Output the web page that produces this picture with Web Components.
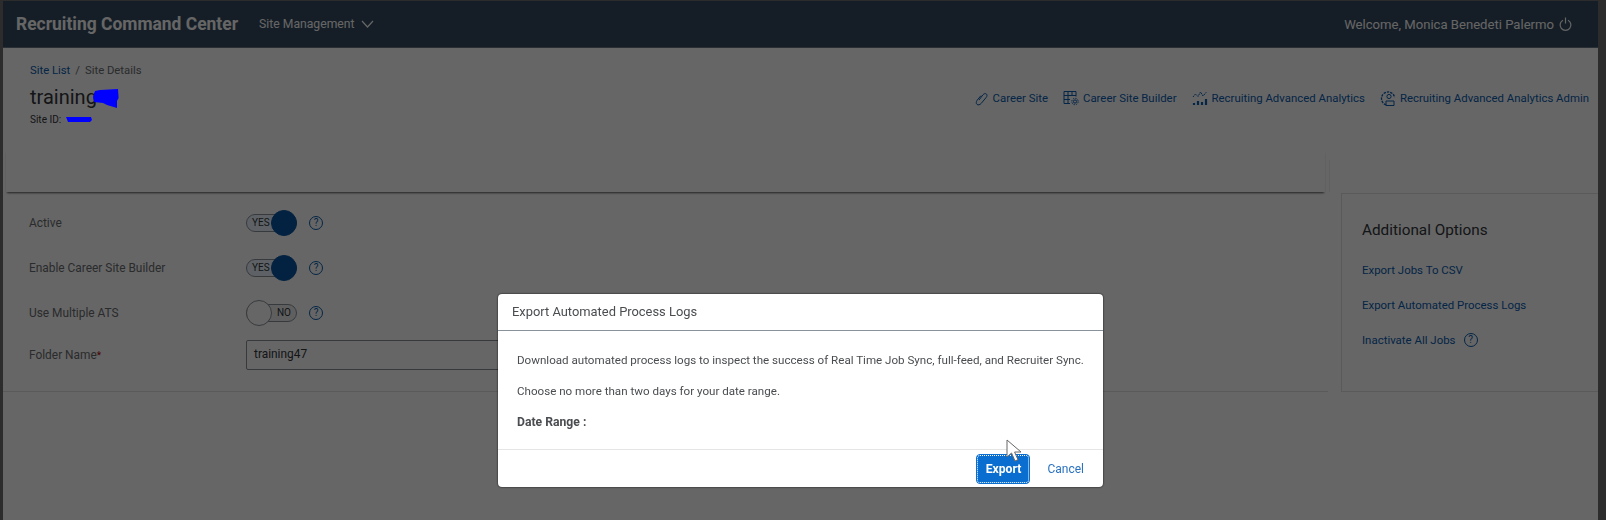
<!DOCTYPE html>
<html lang="en">
<head>
<meta charset="utf-8">
<title>Recruiting Command Center</title>
<style>
  html, body { height: 100%; }
  body {
    margin: 0;
    padding: 1px 8px 0 3px;
    box-sizing: border-box;
    overflow: hidden;
    background: #6e6e6e;
    font-family: Roboto, "Liberation Sans", sans-serif;
    font-size: 12px;
    color: #32363a;
    filter: blur(.35px);
    --link: #0a5cb0;
  }
  rc-app { height: 100%; }
</style>
</head>
<body>
<rc-app>
  <rc-shellbar user="Welcome, Monica Benedeti Palermo"></rc-shellbar>
  <rc-page-head></rc-page-head>
  <rc-tabs></rc-tabs>
  <rc-site-body>
    <rc-site-form slot="form">
      <rc-form-row label="Active"><rc-toggle on></rc-toggle><rc-help></rc-help></rc-form-row>
      <rc-form-row label="Enable Career Site Builder"><rc-toggle on></rc-toggle><rc-help></rc-help></rc-form-row>
      <rc-form-row label="Use Multiple ATS"><rc-toggle></rc-toggle><rc-help></rc-help></rc-form-row>
      <rc-form-row label="Folder Name" required><rc-text-field>training47</rc-text-field></rc-form-row>
    </rc-site-form>
    <rc-options slot="aside"></rc-options>
  </rc-site-body>
</rc-app>
<rc-dialog heading="Export Automated Process Logs">
  <p>Download automated process logs to inspect the success of Real Time Job Sync, full-feed, and Recruiter Sync.</p>
  <p>Choose no more than two days for your date range.</p>
  <p><b style="font-size:12.2px">Date Range :</b></p>
</rc-dialog>

<script>
class RcApp extends HTMLElement {
  constructor() {
    super();
    this.attachShadow({ mode: "open" });
    this.shadowRoot.innerHTML = /* html */`
    <style>
      :host { display: flex; flex-direction: column; background: #fff; }
    </style>
    <slot></slot>`;
  }
}

class RcShellbar extends HTMLElement {
  constructor() {
    super();
    this.attachShadow({ mode: "open" });
  }

  connectedCallback() {
    this.shadowRoot.innerHTML = /* html */`
    <style>
      :host {
        display: flex;
        align-items: center;
        height: 46px;
        padding: 0 26px 0 13px;
        background: #354a5f;
        border-bottom: 1px solid #6a7785;
        color: #fff;
      }
      .brand { font-size: 17.45px; font-weight: 700; }
      .menu { display: flex; align-items: center; gap: 6px; margin-left: 21px; font-size: 12.2px; }
      .user { display: flex; align-items: center; gap: 5px; margin-left: auto; font-size: 13.1px; }
      svg { display: block; fill: none; stroke: currentColor; stroke-width: 1.2; }
    </style>
    <span class="brand">Recruiting Command Center</span>
    <span class="menu">Site Management
      <svg width="13" height="8" viewBox="0 0 13 8"><path d="M1 1l5.5 6L12 1"/></svg>
    </span>
    <span class="user">${this.getAttribute("user")}
      <svg width="13" height="14" viewBox="0 0 13 14"><path d="M4 3.2a5.4 5.4 0 1 0 5 0M6.5 .5v6"/></svg>
    </span>`;
  }
}

class RcPageHead extends HTMLElement {
  constructor() {
    super();
    this.attachShadow({ mode: "open" });
  }

  static get icons() {
    return {
      link: `<path d="M6 10l4-5.2c1-1.3 2.6-1.5 3.4-.8s.8 2.2-.2 3.4L8.2 13.4c-1.3 1.6-3.2 1.8-4.2 1s-1-2.6.2-4.2L8 5.6"/>`,
      builder: `<path d="M7 13.5H1v-12h12v5M5 1.5v12M9 1.5v4M1 5.5h12M1 9.5h6"/><circle cx="12" cy="11.5" r="1.6"/><circle cx="12" cy="11.5" r="3.2" stroke-dasharray="1.4 1.1"/>`,
      analytics: `<path d="M1 7l2.5-3L6 6.5 8.5 2l2.5 4 3.5-4" stroke-dasharray="1.6 .7"/><path d="M2 15v-2M6 15v-4M10 15v-3M14 15V9" stroke-width="2.2"/>`,
      admin: `<path d="M6 14.8A6.6 6.6 0 1 1 14.6 7.5" stroke-dasharray="2.4 1" stroke-width="1.3"/><circle cx="9" cy="6.5" r="2.1"/><path d="M6 15.5v-4.5h8v4.5z"/>`
    };
  }

  connectedCallback() {
    const icons = RcPageHead.icons;
    const links = [
      ["link", "Career Site"],
      ["builder", "Career Site Builder"],
      ["analytics", "Recruiting Advanced Analytics"],
      ["admin", "Recruiting Advanced Analytics Admin"]
    ];

    this.shadowRoot.innerHTML = /* html */`
    <style>
      :host {
        display: flex;
        justify-content: space-between;
        box-sizing: border-box;
        height: 102px;
        padding: 15px 9px 0 27px;
      }
      .crumbs { height: 16px; line-height: 16px; font-size: 11.3px; color: #6a6d70; }
      .crumbs a { color: var(--link); }
      .crumbs i { font-style: normal; margin: 0 5px; }
      h1 {
        position: relative;
        margin: 4px 0 0;
        font-size: 20px;
        line-height: 28px;
        font-weight: 400;
      }
      .id { position: relative; margin-top: 2px; line-height: 14px; font-size: 10px; color: #32363a; }
      /* blue marker scribbles sit on top of everything, even the dialog backdrop */
      .scribble { position: absolute; z-index: 20; }
      h1 .scribble { left: 63px; top: 5px; }
      .id .scribble { left: 35px; top: 3px; }
      nav { display: flex; gap: 15px; height: 20px; margin-top: 25px; }
      nav a { display: flex; align-items: center; gap: 4px; font-size: 11.4px; color: var(--link); white-space: nowrap; }
      nav svg { display: block; fill: none; stroke: currentColor; stroke-width: 1; }
    </style>
    <div>
      <div class="crumbs"><a>Site List</a><i>/</i>Site Details</div>
      <h1>training
        <svg class="scribble" width="26" height="21" viewBox="0 0 26 21"><path d="M2 3l5-1 18-1 .6 9-1.6 3v7l-10-3-4-2-9-1-1-5z" fill="#00f"/></svg>
      </h1>
      <div class="id">Site ID:
        <svg class="scribble" width="28" height="7" viewBox="0 0 28 7"><path d="M1 1h25l1 3-2 2H3z" fill="#00f"/></svg>
      </div>
    </div>
    <nav>
      ${links.map(([icon, text]) => `<a><svg width="16" height="16" viewBox="0 0 16 16">${icons[icon]}</svg>${text}</a>`).join("")}
    </nav>`;
  }
}

class RcTabs extends HTMLElement {
  constructor() {
    super();
    this.attachShadow({ mode: "open" });
    this.shadowRoot.innerHTML = /* html */`
    <style>
      :host { display: flex; height: 42px; }
      .bar { width: 1319px; margin-left: 3px; box-shadow: 0 2px 2px -1px #000a; }
      .rule { width: 1px; margin: 10px 0 0 4px; background: #0000000f; }
    </style>
    <div class="bar"></div>
    <div class="rule"></div>`;
  }
}

class RcSiteBody extends HTMLElement {
  constructor() {
    super();
    this.attachShadow({ mode: "open" });
    this.shadowRoot.innerHTML = /* html */`
    <style>
      :host { display: flex; flex: 1; }
      ::slotted([slot="form"]) { width: 1325px; }
      ::slotted([slot="aside"]) { flex: 1; margin-left: 13px; }
    </style>
    <slot name="form"></slot>
    <slot name="aside"></slot>`;
  }
}

class RcSiteForm extends HTMLElement {
  constructor() {
    super();
    this.attachShadow({ mode: "open" });
    this.shadowRoot.innerHTML = /* html */`
    <style>
      :host {
        display: block;
        box-sizing: border-box;
        height: 200px;
        padding: 8px 0 0 26px;
        border-bottom: 1px solid #e0e0e0;
      }
    </style>
    <slot></slot>`;
  }
}

class RcFormRow extends HTMLElement {
  constructor() {
    super();
    this.attachShadow({ mode: "open" });
  }

  connectedCallback() {
    const star = this.hasAttribute("required") ? `<span class="req">*</span>` : "";
    this.shadowRoot.innerHTML = /* html */`
    <style>
      :host {
        display: grid;
        grid-template-columns: 217px 1fr;
        align-items: center;
        height: 45px;
      }
      :host([required]) { height: 40px; }
      label { font-size: 11.9px; color: #6a6d70; }
      .req { color: #bb0000; font-size: 10px; }
      .field { display: flex; align-items: center; gap: 12px; }
    </style>
    <label>${this.getAttribute("label")}${star}</label>
    <div class="field"><slot></slot></div>`;
  }
}

class RcToggle extends HTMLElement {
  constructor() {
    super();
    this.attachShadow({ mode: "open" });
  }

  connectedCallback() {
    const on = this.hasAttribute("on");
    this.shadowRoot.innerHTML = /* html */`
    <style>
      :host {
        position: relative;
        display: flex;
        align-items: center;
        width: 51px;
        height: 26px;
      }
      .track {
        box-sizing: border-box;
        width: 100%;
        height: 18px;
        line-height: 16px;
        padding: 0 5px;
        border: 1px solid #89919a;
        border-radius: 9px;
        background: ${on ? "#ebf5fe" : "#ededed"};
        font-size: 10px;
        color: #32363a;
        text-align: ${on ? "left" : "right"};
      }
      .knob {
        position: absolute;
        top: 0;
        ${on ? "right: 0;" : "left: 0;"}
        box-sizing: border-box;
        width: 26px;
        height: 26px;
        border-radius: 50%;
        border: 1px solid ${on ? "#0854a0" : "#89919a"};
        background: ${on ? "#0854a0" : "#fff"};
      }
    </style>
    <div class="track">${on ? "YES" : "NO"}</div>
    <div class="knob"></div>`;
  }
}

class RcHelp extends HTMLElement {
  constructor() {
    super();
    this.attachShadow({ mode: "open" });
    this.shadowRoot.innerHTML = /* html */`
    <style>
      :host {
        display: inline-grid;
        place-items: center;
        box-sizing: border-box;
        width: 14px;
        height: 14px;
        border: 1px solid var(--link);
        border-radius: 50%;
        font-size: 10px;
        line-height: 1;
        color: var(--link);
      }
    </style>
    ?`;
  }
}

class RcTextField extends HTMLElement {
  constructor() {
    super();
    this.attachShadow({ mode: "open" });
    this.shadowRoot.innerHTML = /* html */`
    <style>
      :host {
        display: block;
        box-sizing: border-box;
        width: 700px;
        height: 30px;
        padding: 0 7px;
        line-height: 26px;
        border: 1px solid #89919a;
        border-radius: 2px;
        background: #fff;
        font-size: 11.9px;
        color: #32363a;
      }
    </style>
    <slot></slot>`;
  }
}

class RcOptions extends HTMLElement {
  constructor() {
    super();
    this.attachShadow({ mode: "open" });
  }

  connectedCallback() {
    this.shadowRoot.innerHTML = /* html */`
    <style>
      :host {
        display: block;
        box-sizing: border-box;
        height: 199px;
        margin-top: 1px;
        padding: 26px 0 0 20px;
        border: 1px solid #e0e0e0;
        border-right: 0;
      }
      h2 { margin: 0 0 20px; font-size: 15.3px; line-height: 20px; font-weight: 400; }
      a { display: flex; align-items: center; gap: 8px; height: 20px; margin-bottom: 15px; font-size: 11.45px; color: var(--link); }
    </style>
    <h2>Additional Options</h2>
    <a>Export Jobs To CSV</a>
    <a>Export Automated Process Logs</a>
    <a>Inactivate All Jobs <rc-help></rc-help></a>`;
  }
}

class RcDialog extends HTMLElement {
  constructor() {
    super();
    this.attachShadow({ mode: "open" });
  }

  connectedCallback() {
    this.shadowRoot.innerHTML = /* html */`
    <style>
      :host {
        position: fixed;
        inset: 0;
        z-index: 10;
        box-sizing: border-box;
        padding: 294px 0 0 498px;
        background: #0009;
      }
      .box {
        position: relative;
        box-sizing: border-box;
        width: 605px;
        height: 193px;
        display: flex;
        flex-direction: column;
        background: #fff;
        border-radius: 4px;
        box-shadow: 0 0 2px #000;
      }
      header {
        height: 36px;
        line-height: 36px;
        padding-left: 14px;
        border-bottom: 1px solid #89919a;
        font-size: 12.9px;
        color: #4a4d50;
      }
      .content { flex: 1; min-height: 0; padding: 21px 19px 0; font-size: 11.6px; color: #4a4d50; }
      ::slotted(p) { margin: 0 0 15px; line-height: 16px; white-space: nowrap; font-size: 11.6px; }
      footer {
        display: flex;
        align-items: center;
        justify-content: flex-end;
        gap: 17px;
        height: 37px;
        padding-right: 19px;
        border-top: 1px solid #e5e5e5;
      }
      button {
        width: 54px;
        height: 30px;
        margin: 0;
        padding: 0;
        border: 1px solid #0a6ed1;
        border-radius: 4px;
        outline: 1px dotted #fff;
        outline-offset: -2px;
        background: #0a6ed1;
        color: #fff;
        font: 700 12.2px Roboto, sans-serif;
      }
      .cancel { font-size: 12px; color: #2a72c0; }
      .pointer { position: absolute; left: 508px; top: 145px; }
    </style>
    <div class="box">
      <header>${this.getAttribute("heading")}</header>
      <div class="content"><slot></slot></div>
      <footer>
        <button>Export</button>
        <span class="cancel">Cancel</span>
      </footer>
      <svg class="pointer" width="18" height="24" viewBox="0 0 18 24">
        <path d="M1 1v17l4.5-4 3.5 8 3-1.3-3.4-7.7H15z" fill="#fff" stroke="#666" stroke-width="1"/>
      </svg>
    </div>`;
  }
}

customElements.define("rc-app", RcApp);
customElements.define("rc-shellbar", RcShellbar);
customElements.define("rc-page-head", RcPageHead);
customElements.define("rc-tabs", RcTabs);
customElements.define("rc-site-body", RcSiteBody);
customElements.define("rc-site-form", RcSiteForm);
customElements.define("rc-form-row", RcFormRow);
customElements.define("rc-toggle", RcToggle);
customElements.define("rc-help", RcHelp);
customElements.define("rc-text-field", RcTextField);
customElements.define("rc-options", RcOptions);
customElements.define("rc-dialog", RcDialog);
</script>
</body>
</html>
